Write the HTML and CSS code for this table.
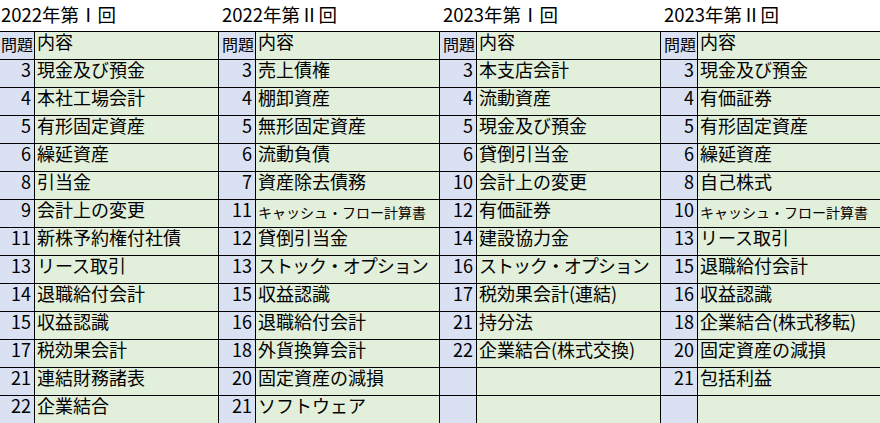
FILE: index.html
```html
<!DOCTYPE html>
<html lang="ja">
<head>
<meta charset="utf-8">
<link rel="stylesheet" href="styles.css">
</head>
<body>
<div class="sheet">
  <div class="tbl">
    <div class="title">2022年第Ⅰ回</div>
    <div class="row head"><div class="q qh">問題</div><div class="c">内容</div></div>
    <div class="row"><div class="q">3</div><div class="c">現金及び預金</div></div>
    <div class="row"><div class="q">4</div><div class="c">本社工場会計</div></div>
    <div class="row"><div class="q">5</div><div class="c">有形固定資産</div></div>
    <div class="row"><div class="q">6</div><div class="c">繰延資産</div></div>
    <div class="row"><div class="q">8</div><div class="c">引当金</div></div>
    <div class="row"><div class="q">9</div><div class="c">会計上の変更</div></div>
    <div class="row"><div class="q">11</div><div class="c">新株予約権付社債</div></div>
    <div class="row"><div class="q">13</div><div class="c">リース取引</div></div>
    <div class="row"><div class="q">14</div><div class="c">退職給付会計</div></div>
    <div class="row"><div class="q">15</div><div class="c">収益認識</div></div>
    <div class="row"><div class="q">17</div><div class="c">税効果会計</div></div>
    <div class="row"><div class="q">21</div><div class="c">連結財務諸表</div></div>
    <div class="row"><div class="q">22</div><div class="c">企業結合</div></div>
  </div>
  <div class="tbl">
    <div class="title">2022年第Ⅱ回</div>
    <div class="row head"><div class="q qh">問題</div><div class="c">内容</div></div>
    <div class="row"><div class="q">3</div><div class="c">売上債権</div></div>
    <div class="row"><div class="q">4</div><div class="c">棚卸資産</div></div>
    <div class="row"><div class="q">5</div><div class="c">無形固定資産</div></div>
    <div class="row"><div class="q">6</div><div class="c">流動負債</div></div>
    <div class="row"><div class="q">7</div><div class="c">資産除去債務</div></div>
    <div class="row"><div class="q">11</div><div class="c small">キャッシュ・フロー計算書</div></div>
    <div class="row"><div class="q">12</div><div class="c">貸倒引当金</div></div>
    <div class="row"><div class="q">13</div><div class="c narrow">ストック・オプション</div></div>
    <div class="row"><div class="q">15</div><div class="c">収益認識</div></div>
    <div class="row"><div class="q">16</div><div class="c">退職給付会計</div></div>
    <div class="row"><div class="q">18</div><div class="c">外貨換算会計</div></div>
    <div class="row"><div class="q">20</div><div class="c">固定資産の減損</div></div>
    <div class="row"><div class="q">21</div><div class="c">ソフトウェア</div></div>
  </div>
  <div class="tbl">
    <div class="title">2023年第Ⅰ回</div>
    <div class="row head"><div class="q qh">問題</div><div class="c">内容</div></div>
    <div class="row"><div class="q">3</div><div class="c">本支店会計</div></div>
    <div class="row"><div class="q">4</div><div class="c">流動資産</div></div>
    <div class="row"><div class="q">5</div><div class="c">現金及び預金</div></div>
    <div class="row"><div class="q">6</div><div class="c">貸倒引当金</div></div>
    <div class="row"><div class="q">10</div><div class="c">会計上の変更</div></div>
    <div class="row"><div class="q">12</div><div class="c">有価証券</div></div>
    <div class="row"><div class="q">14</div><div class="c">建設協力金</div></div>
    <div class="row"><div class="q">16</div><div class="c narrow">ストック・オプション</div></div>
    <div class="row"><div class="q">17</div><div class="c">税効果会計(連結)</div></div>
    <div class="row"><div class="q">21</div><div class="c">持分法</div></div>
    <div class="row"><div class="q">22</div><div class="c">企業結合(株式交換)</div></div>
    <div class="row"><div class="q"></div><div class="c"></div></div>
    <div class="row"><div class="q"></div><div class="c"></div></div>
  </div>
  <div class="tbl">
    <div class="title">2023年第Ⅱ回</div>
    <div class="row head"><div class="q qh">問題</div><div class="c">内容</div></div>
    <div class="row"><div class="q">3</div><div class="c">現金及び預金</div></div>
    <div class="row"><div class="q">4</div><div class="c">有価証券</div></div>
    <div class="row"><div class="q">5</div><div class="c">有形固定資産</div></div>
    <div class="row"><div class="q">6</div><div class="c">繰延資産</div></div>
    <div class="row"><div class="q">8</div><div class="c">自己株式</div></div>
    <div class="row"><div class="q">10</div><div class="c small">キャッシュ・フロー計算書</div></div>
    <div class="row"><div class="q">13</div><div class="c">リース取引</div></div>
    <div class="row"><div class="q">15</div><div class="c">退職給付会計</div></div>
    <div class="row"><div class="q">16</div><div class="c">収益認識</div></div>
    <div class="row"><div class="q">18</div><div class="c">企業結合(株式移転)</div></div>
    <div class="row"><div class="q">20</div><div class="c">固定資産の減損</div></div>
    <div class="row"><div class="q">21</div><div class="c">包括利益</div></div>
    <div class="row"><div class="q"></div><div class="c"></div></div>
  </div>
</div>
</body>
</html>
```

FILE: styles.css
```css
html, body {
  margin: 0;
  padding: 0;
  background: #ffffff;
}
body {
  font-family: "Noto Sans CJK JP", "Noto Sans", sans-serif;
  color: #000000;
  font-size: 18px;
}
.sheet {
  display: flex;
  margin-left: -2px;
  width: 882px;
}
.tbl {
  flex: 0 0 221px;
  display: flex;
  flex-direction: column;
}
.tbl:last-child {
  flex: 0 0 220px;
}
.title {
  height: 31px;
  line-height: 28px;
  padding-left: 3px;
  font-size: 18.5px;
  white-space: nowrap;
  box-sizing: border-box;
}
.row {
  display: grid;
  grid-template-columns: 37px 184px;
  height: 28px;
  border-bottom: 1px solid #000000;
  box-sizing: border-box;
}
.tbl:last-child .row {
  grid-template-columns: 37px 183px;
}
.row.head {
  height: 29px;
  border-top: 1px solid #000000;
}
.q, .c {
  box-sizing: border-box;
  border-right: 1px solid #000000;
  line-height: 19px;
  white-space: nowrap;
}
.q {
  background: #d9e1f2;
  text-align: right;
  padding-right: 3px;
}
.qh {
  font-size: 16px;
  padding-right: 1px;
  line-height: 24px;
}
.c {
  background: #e2efda;
  padding-left: 2px;
}
.c.small {
  font-size: 14px;
  line-height: 25px;
}
.c.narrow {
  letter-spacing: -1px;
}
```
